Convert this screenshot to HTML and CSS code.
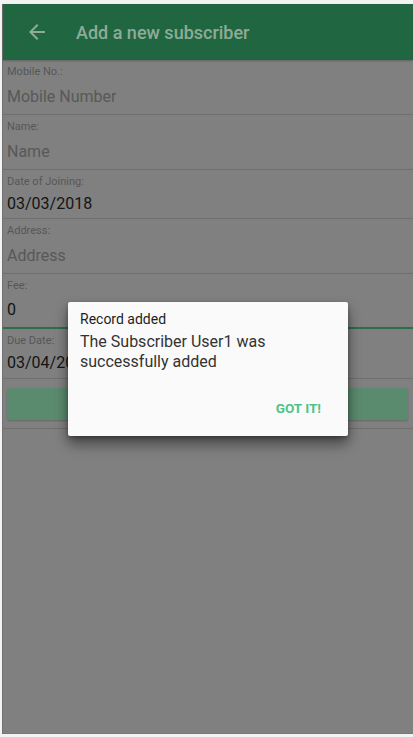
FILE: index.html
```html
<!DOCTYPE html>
<html lang="en">
<head>
<meta charset="utf-8">
<title>Add a new subscriber</title>
<link rel="stylesheet" href="styles.css">
</head>
<body>
<div class="app">
  <header class="toolbar">
    <svg class="back" viewBox="0 0 24 24" width="24" height="24" aria-hidden="true"><path d="M20 11H7.83l5.59-5.59L12 4l-8 8 8 8 1.41-1.41L7.83 13H20v-2z"/></svg>
    <h1 class="title">Add a new subscriber</h1>
  </header>
  <main class="form">
    <div class="field">
      <div class="label">Mobile No.:</div>
      <div class="value placeholder">Mobile Number</div>
    </div>
    <div class="field">
      <div class="label">Name:</div>
      <div class="value placeholder">Name</div>
    </div>
    <div class="field">
      <div class="label">Date of Joining:</div>
      <div class="value filled short">03/03/2018</div>
    </div>
    <div class="field">
      <div class="label">Address:</div>
      <div class="value placeholder">Address</div>
    </div>
    <div class="field focused">
      <div class="label">Fee:</div>
      <div class="value filled tall">0</div>
    </div>
    <div class="field">
      <div class="label">Due Date:</div>
      <div class="value filled">03/04/2018</div>
    </div>
    <div class="actions-row">
      <div class="submit"></div>
    </div>
  </main>
  <div class="dialog" role="dialog">
    <div class="dialog-title">Record added</div>
    <div class="dialog-body">The Subscriber User1 was successfully added</div>
    <div class="dialog-actions"><span class="dialog-btn">GOT IT!</span></div>
  </div>
</div>
</body>
</html>
```
FILE: styles.css
```css
html, body {
  margin: 0;
  padding: 0;
}
body {
  background: #f3f3f3;
  font-family: Roboto, "Liberation Sans", sans-serif;
  padding: 4px 0 3px 2px;
  box-sizing: border-box;
  height: 737px;
  overflow: hidden;
}
.app {
  position: relative;
  height: 730px;
  background: #808080;
  border-left: 1px solid #727272;
  border-bottom: 1px solid #777;
  box-sizing: border-box;
}
.toolbar {
  height: 56px;
  background: #206741;
  display: flex;
  align-items: center;
  padding-left: 22px;
  box-shadow: 0 1px 2px rgba(0,0,0,.25);
}
.back {
  fill: #8fab97;
  width: 24px;
  height: 24px;
}
.title {
  margin: 0 0 0 27px;
  font-size: 18px;
  font-weight: 500;
  color: #8fab97;
}
.form {
  display: flex;
  flex-direction: column;
}
.field {
  padding: 5px 4px 2px 4px;
  border-bottom: 1px solid #6f6f6f;
}
.label {
  font-size: 11px;
  line-height: 14px;
  color: #575757;
}
.value {
  font-size: 16px;
  margin-top: 2px;
}
.placeholder {
  line-height: 31px;
  color: #585858;
}
.filled {
  line-height: 26px;
  color: #141414;
}
.filled.short {
  line-height: 25px;
}
.filled.tall {
  line-height: 30px;
}
.field.focused {
  border-bottom: 2px solid #2a6f48;
}
.actions-row {
  padding: 9px 5px 8px 4px;
  border-bottom: 1px solid #6f6f6f;
}
.submit {
  height: 32px;
  background: #5b8b6e;
  border-radius: 2px;
  box-shadow: 0 1px 2px rgba(0,0,0,.2);
}
.dialog {
  position: absolute;
  left: 65px;
  top: 298px;
  width: 280px;
  height: 134px;
  box-sizing: border-box;
  background: #fafafa;
  border-radius: 2px;
  box-shadow: 0 8px 14px rgba(0,0,0,.45), 0 2px 4px rgba(0,0,0,.3);
  padding: 9px 12px 0 12px;
  display: flex;
  flex-direction: column;
}
.dialog-title {
  font-size: 14px;
  line-height: 16px;
  font-weight: 400;
  color: #1e1e1e;
}
.dialog-body {
  margin-top: 5px;
  font-size: 16px;
  line-height: 20px;
  color: #333;
  padding-right: 60px;
}
.dialog-actions {
  margin-top: 18px;
  display: flex;
  justify-content: flex-end;
  padding-right: 15px;
}
.dialog-btn {
  font-size: 13.5px;
  font-weight: 700;
  line-height: 36px;
  color: #4fc28a;
}
```
